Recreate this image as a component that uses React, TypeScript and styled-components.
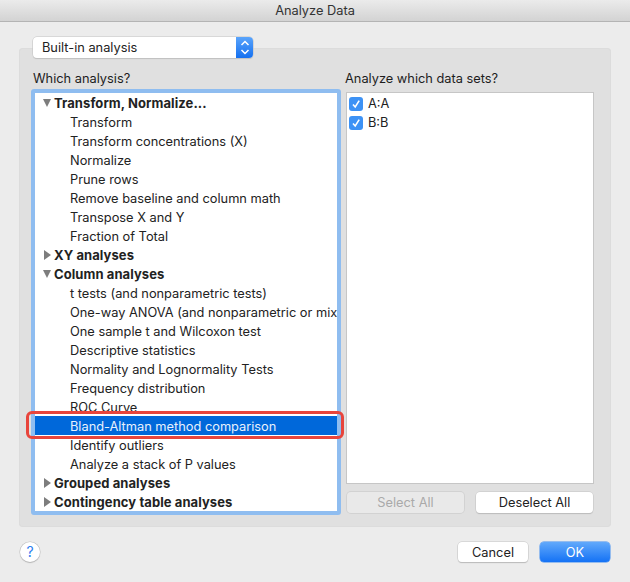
import React from 'react';
import styled, { createGlobalStyle } from 'styled-components';

const GlobalStyle = createGlobalStyle`
  html, body {
    margin: 0;
    padding: 0;
    background: #ececec;
  }
  body {
    font-family: Inter, "Liberation Sans", sans-serif;
    font-size: 13px;
    color: #222;
  }
`;

type Row = { label: string; kind: 'open' | 'closed' | 'item' | 'selected' };

const rows: Row[] = [
  { label: 'Transform, Normalize...', kind: 'open' },
  { label: 'Transform', kind: 'item' },
  { label: 'Transform concentrations (X)', kind: 'item' },
  { label: 'Normalize', kind: 'item' },
  { label: 'Prune rows', kind: 'item' },
  { label: 'Remove baseline and column math', kind: 'item' },
  { label: 'Transpose X and Y', kind: 'item' },
  { label: 'Fraction of Total', kind: 'item' },
  { label: 'XY analyses', kind: 'closed' },
  { label: 'Column analyses', kind: 'open' },
  { label: 't tests (and nonparametric tests)', kind: 'item' },
  { label: 'One-way ANOVA (and nonparametric or mixed)', kind: 'item' },
  { label: 'One sample t and Wilcoxon test', kind: 'item' },
  { label: 'Descriptive statistics', kind: 'item' },
  { label: 'Normality and Lognormality Tests', kind: 'item' },
  { label: 'Frequency distribution', kind: 'item' },
  { label: 'ROC Curve', kind: 'item' },
  { label: 'Bland-Altman method comparison', kind: 'selected' },
  { label: 'Identify outliers', kind: 'item' },
  { label: 'Analyze a stack of P values', kind: 'item' },
  { label: 'Grouped analyses', kind: 'closed' },
  { label: 'Contingency table analyses', kind: 'closed' },
];

export default function App() {
  return (
    <>
      <GlobalStyle />
      <Dialog>
        <TitleBar>Analyze Data</TitleBar>
        <Body>
          <Popup>
            <PopupLabel>Built-in analysis</PopupLabel>
            <PopupStepper>
              <svg width="10" height="15" viewBox="0 0 10 15" fill="none" stroke="#fff" strokeWidth="1.5">
                <path d="M1.5 5 L5 1.5 L8.5 5" />
                <path d="M1.5 10 L5 13.5 L8.5 10" />
              </svg>
            </PopupStepper>
          </Popup>
          <Panel>
            <Column>
              <Heading>Which analysis?</Heading>
              <ListWrap>
                <AnalysisList>
                  {rows.map((row) => (
                    <ListRow key={row.label} $selected={row.kind === 'selected'}>
                      {row.kind === 'open' && <OpenArrow />}
                      {row.kind === 'closed' && <ClosedArrow />}
                      {row.kind === 'open' || row.kind === 'closed' ? (
                        <GroupLabel>{row.label}</GroupLabel>
                      ) : (
                        <ItemLabel>{row.label}</ItemLabel>
                      )}
                    </ListRow>
                  ))}
                </AnalysisList>
                <Highlight />
              </ListWrap>
            </Column>
            <SideColumn>
              <SideHeading>Analyze which data sets?</SideHeading>
              <DataList>
                {['A:A', 'B:B'].map((name) => (
                  <DataRow key={name}>
                    <Check>
                      <svg width="10" height="10" viewBox="0 0 10 10" fill="none" stroke="#fff" strokeWidth="1.6">
                        <path d="M2 5.5 L4.2 8 L8.2 1.6" />
                      </svg>
                    </Check>
                    {name}
                  </DataRow>
                ))}
              </DataList>
              <ButtonRow>
                <SmallButton disabled>Select All</SmallButton>
                <SmallButton>Deselect All</SmallButton>
              </ButtonRow>
            </SideColumn>
          </Panel>
          <Footer>
            <HelpButton>?</HelpButton>
            <FooterButtons>
              <CancelButton>Cancel</CancelButton>
              <OkButton>OK</OkButton>
            </FooterButtons>
          </Footer>
        </Body>
      </Dialog>
    </>
  );
}

const Dialog = styled.div`
  width: 630px;
  height: 582px;
  background: #ececec;
  display: flex;
  flex-direction: column;
  overflow: hidden;
`;

const TitleBar = styled.div`
  height: 21px;
  line-height: 22px;
  text-align: center;
  font-size: 12.8px;
  color: #333;
  background: linear-gradient(#ebebeb, #d3d3d3);
  border-bottom: 1px solid #b4b4b4;
`;

const Body = styled.div`
  flex: 1;
  display: flex;
  flex-direction: column;
  padding: 15px 19px 0;
`;

const Popup = styled.div`
  position: relative;
  z-index: 1;
  width: 220px;
  height: 21px;
  margin: 0 0 -10px 14px;
  display: flex;
  background: #fff;
  border-radius: 4px;
  box-shadow: 0 0 0 0.5px #c4c4c4, 0 1px 1px #bdbdbd;
`;

const PopupLabel = styled.div`
  flex: 1;
  padding-left: 9px;
  line-height: 21px;
  font-size: 12.8px;
  color: #222;
`;

const PopupStepper = styled.div`
  width: 17px;
  display: flex;
  align-items: center;
  justify-content: center;
  border-radius: 0 4px 4px 0;
  background: linear-gradient(#5aa4fb, #1470f0);
`;

const Panel = styled.div`
  width: 592px;
  height: 479px;
  box-sizing: border-box;
  padding: 20px 17px 0 12px;
  display: flex;
  background: #e0e0e0;
  border-radius: 4px;
  box-shadow: inset 0 0 0 1px #dcdcdc;
`;

const Column = styled.div`
  width: 310px;
  display: flex;
  flex-direction: column;
`;

const SideColumn = styled.div`
  width: 248px;
  margin-left: 5px;
  display: flex;
  flex-direction: column;
`;

const Heading = styled.div`
  height: 21px;
  line-height: 21px;
  padding-left: 2px;
  font-size: 12.8px;
  color: #1d1d1d;
`;

const SideHeading = styled(Heading)`
  padding-left: 0;
  margin-left: -1px;
`;

const ListWrap = styled.div`
  position: relative;
  width: 310px;
  height: 426px;
`;

const AnalysisList = styled.div`
  height: 100%;
  box-sizing: border-box;
  background: #fff;
  border: 4px solid #8fbdf0;
  border-radius: 3px;
  overflow: hidden;
`;

const ListRow = styled.div<{ $selected: boolean }>`
  position: relative;
  height: 19px;
  line-height: 21px;
  white-space: nowrap;
  background: ${(p) => (p.$selected ? '#0068da' : 'transparent')};
  color: ${(p) => (p.$selected ? '#e8f1fc' : '#222')};
`;

const GroupLabel = styled.span`
  margin-left: 19px;
  font-weight: 700;
  font-size: 13px;
  letter-spacing: 0.08px;
`;

const ItemLabel = styled.span`
  margin-left: 35px;
  font-size: 12.8px;
`;

const OpenArrow = styled.span`
  position: absolute;
  left: 8px;
  top: 6px;
  border-left: 4.5px solid transparent;
  border-right: 4.5px solid transparent;
  border-top: 8px solid #7d7d7d;
`;

const ClosedArrow = styled.span`
  position: absolute;
  left: 9px;
  top: 5px;
  border-top: 5px solid transparent;
  border-bottom: 5px solid transparent;
  border-left: 7px solid #7d7d7d;
`;

const Highlight = styled.div`
  position: absolute;
  left: -5px;
  top: 322px;
  width: 318px;
  height: 28px;
  box-sizing: border-box;
  border: 3px solid #e8453c;
  border-radius: 6px;
`;

const DataList = styled.div`
  height: 392px;
  margin-top: 3px;
  padding-top: 1px;
  box-sizing: border-box;
  background: #fff;
  border: 1px solid #c6c6c6;
`;

const DataRow = styled.div`
  height: 19px;
  display: flex;
  align-items: center;
  gap: 5px;
  padding-left: 2px;
  font-size: 12.8px;
  color: #222;
`;

const Check = styled.span`
  width: 14px;
  height: 14px;
  border-radius: 3px;
  background: #3d92f5;
  display: flex;
  align-items: center;
  justify-content: center;
`;

const ButtonRow = styled.div`
  display: flex;
  justify-content: space-between;
  margin-top: 8px;
  padding: 0 1px;
`;

const SmallButton = styled.button`
  width: 117px;
  height: 21px;
  padding: 0;
  border: none;
  border-radius: 4px;
  font-family: inherit;
  font-size: 12.8px;
  color: #222;
  background: #fff;
  box-shadow: 0 0 0 0.5px #c4c4c4, 0 1px 1px #b4b4b4;

  &:disabled {
    color: #aaa;
    background: #e9e9e9;
    box-shadow: 0 0 0 1px #d2d2d2;
  }
`;

const Footer = styled.div`
  display: flex;
  align-items: center;
  justify-content: space-between;
  margin-top: 15px;
  padding-left: 1px;
`;

const HelpButton = styled.div`
  width: 20px;
  height: 20px;
  border-radius: 50%;
  background: #fff;
  box-shadow: 0 0 0 0.5px #bdbdbd, 0 1px 1px #b4b4b4;
  text-align: center;
  line-height: 20px;
  font-size: 14px;
  color: #2a7df0;
`;

const FooterButtons = styled.div`
  display: flex;
  gap: 12px;
  padding-right: 1px;
`;

const CancelButton = styled.button`
  width: 70px;
  height: 20px;
  padding: 0;
  border: none;
  border-radius: 4px;
  font-family: inherit;
  font-size: 12.8px;
  color: #222;
  background: #fff;
  box-shadow: 0 0 0 0.5px #c4c4c4, 0 1px 1px #b4b4b4;
`;

const OkButton = styled(CancelButton)`
  color: #fff;
  background: linear-gradient(#62a9fb, #1472f5);
  box-shadow: 0 0 0 0.5px #3f8cf0;
`;
